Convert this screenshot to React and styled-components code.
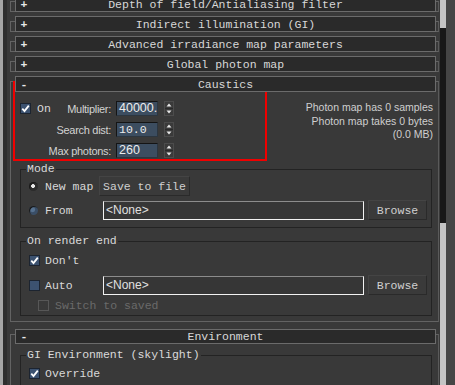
import styled, { createGlobalStyle } from 'styled-components';

const mono = `"Liberation Mono", "DejaVu Sans Mono", monospace`;
const sans = `"Liberation Sans", Arial, sans-serif`;

const GlobalStyle = createGlobalStyle`
  html, body { margin: 0; padding: 0; background: #393939; }
  body { width: 455px; height: 385px; overflow: hidden; }
`;

const Window = styled.div`
  position: relative;
  display: flex;
  width: 455px;
  height: 385px;
  overflow: hidden;
  background: #393939;
  color: #d6d6d6;
  font-family: ${mono};
  font-size: 11.5px;
`;

const LeftEdge = styled.div`
  flex: none;
  width: 8px;
  background: linear-gradient(to right, #a6a6a6 0 3px, #2e2e2e 3px 7px, #393939 7px);
`;

const Panel = styled.div`
  flex: 1;
  min-width: 0;
  padding: 0 1px 0 2px;
  margin-top: -4px;
`;

const ScrollTrack = styled.div`
  flex: none;
  width: 6px;
  display: flex;
  flex-direction: column;
  background: #181818;
`;

const Thumb = styled.div`
  flex: none;
  height: ${p => p.$h}px;
  margin-top: ${p => p.$top || 0}px;
  background: #c4c4c4;
`;

const RightEdge = styled.div`
  flex: none;
  width: 9px;
  background: #454545;
`;

const Rollout = styled.section`
  position: relative;
  margin: 0 0 ${p => p.$mb || 4}px;
  padding: 0 3px 0 5px;
  &::before {
    content: '';
    position: absolute;
    left: 0;
    right: 0;
    top: 5px;
    bottom: 0;
    border: 1px solid #636363;
    border-right-color: #5a5a5a;
  }
`;

const RollHeader = styled.div`
  position: relative;
  z-index: 1;
  display: grid;
  grid-template-columns: 16px 1fr 16px;
  align-items: center;
  height: ${p => p.$h || 16}px;
  box-sizing: border-box;
  border: 1px solid #6b6b6b;
  background: #2a2a2a;
  line-height: 13px;
  color: #d8d8d8;
`;

const Toggle = styled.span`
  text-align: center;
  font-weight: bold;
  color: #e8e8e8;
`;

const Title = styled.span`
  text-align: center;
  white-space: nowrap;
`;

const RollBody = styled.div`
  position: relative;
  padding: ${p => p.$pt}px 4px ${p => p.$pb}px 5px;
`;

const TopSection = styled.div`
  display: flex;
  justify-content: space-between;
`;

const Params = styled.div`
  display: flex;
  flex-direction: column;
  gap: 6px;
`;

const ParamRow = styled.div`
  display: flex;
  align-items: center;
  height: 15px;
`;

const LabelCell = styled.div`
  width: 91px;
  display: flex;
  align-items: center;
  justify-content: space-between;
`;

const SansLabel = styled.span`
  margin-left: auto;
  font-family: ${sans};
  font-size: 11px;
  letter-spacing: -0.3px;
  color: #d2d2d2;
  white-space: nowrap;
`;

const SpinInput = styled.div`
  margin-left: 5px;
  width: 42px;
  height: 15px;
  box-sizing: border-box;
  border: 1px solid #141414;
  border-right-color: #2c3640;
  border-bottom-color: #2c3640;
  background: #3c4d60;
  color: #ececec;
  font-family: ${p => (p.$mono ? mono : sans)};
  font-size: ${p => (p.$mono ? 11.5 : 12.5)}px;
  line-height: 13px;
  padding-left: 2px;
  overflow: hidden;
  white-space: nowrap;
`;

const SpinBox = styled.svg`
  margin-left: 6px;
  flex: none;
`;

const Stats = styled.div`
  margin-right: -1px;
  font-family: ${sans};
  font-size: 10.5px;
  line-height: 13.5px;
  text-align: right;
  color: #cfcfcf;
`;

const Group = styled.fieldset`
  margin: ${p => p.$mt}px 0 0;
  padding: 0 4px ${p => p.$pb}px 8px;
  border: 1px solid #232323;
  min-width: 0;
`;

const Legend = styled.legend`
  margin-left: -3px;
  padding: 0 1px;
  line-height: 12px;
  color: #dadada;
  white-space: nowrap;
`;

const Row = styled.div`
  display: flex;
  align-items: center;
  height: ${p => p.$h}px;
  margin-top: ${p => p.$mt}px;
`;

const OptionLabel = styled.label`
  flex: none;
  width: ${p => (p.$w ? `${p.$w}px` : 'auto')};
  display: flex;
  align-items: center;
  gap: ${p => p.$gap || 5}px;
  color: ${p => (p.$disabled ? '#6a6a6a' : '#d8d8d8')};
  white-space: nowrap;
`;

const Box = styled.span`
  flex: none;
  width: 11px;
  height: 11px;
  box-sizing: border-box;
  margin-left: ${p => p.$indent || 0}px;
  display: inline-flex;
  align-items: center;
  justify-content: center;
  background: ${p => (p.$disabled ? 'transparent' : '#3c5270')};
  border: 1px solid ${p => (p.$disabled ? '#575757' : '#1c2430')};
`;

const RadioDot = styled.span`
  flex: none;
  width: 9px;
  height: 9px;
  border-radius: 50%;
  background: ${p =>
    p.$on
      ? 'radial-gradient(circle at 45% 45%, #e6e6e6 0 1.6px, #2a2a2a 2.2px)'
      : 'radial-gradient(circle at 40% 40%, #56718f 0 2px, #3a4e66 3px)'};
  box-shadow: inset 1px 1px 0 #1a1a1a;
`;

const Button = styled.div`
  flex: none;
  width: ${p => p.$w}px;
  height: 20px;
  margin-left: ${p => p.$ml || 0}px;
  box-sizing: border-box;
  display: flex;
  align-items: center;
  justify-content: center;
  background: #3a3a3a;
  border: 1px solid #2a2a2a;
  border-top-color: #444;
  border-left-color: #444;
  color: #d0d0d0;
  white-space: nowrap;
`;

const Field = styled.div`
  flex: none;
  width: 261px;
  height: 19px;
  box-sizing: border-box;
  background: #363636;
  border: 1px solid #f2f2f2;
  border-top-color: #8c8c8c;
  font-family: ${sans};
  font-size: 12px;
  line-height: 17px;
  padding-left: 2px;
  color: #e0e0e0;
`;

const Annotation = styled.div`
  position: absolute;
  left: 13px;
  top: 81px;
  width: 254px;
  height: 80px;
  box-sizing: border-box;
  border: 2px solid #f00000;
  pointer-events: none;
`;

const Check = () => (
  <svg width="9" height="9" viewBox="0 0 9 9">
    <path d="M1.3 4.6 L3.5 7 L7.8 1.6" stroke="#fff" strokeWidth="1.8" fill="none" />
  </svg>
);

const CheckBox = ({ checked, disabled, indent }) => (
  <Box $disabled={disabled} $indent={indent}>
    {checked && <Check />}
  </Box>
);

const Spinner = () => (
  <SpinBox width="10" height="15" viewBox="0 0 10 15">
    <rect x="0.5" y="0.5" width="9" height="14" fill="#3a3a3a" stroke="#4c4c4c" />
    <line x1="1" y1="7.5" x2="9" y2="7.5" stroke="#2a2a2a" />
    <path d="M5 2.5 L7.5 5.5 L2.5 5.5 Z" fill="#e8e8e8" />
    <path d="M5 12.5 L7.5 9.5 L2.5 9.5 Z" fill="#e8e8e8" />
  </SpinBox>
);

const Collapsed = ({ title }) => (
  <Rollout>
    <RollHeader>
      <Toggle>+</Toggle>
      <Title>{title}</Title>
      <span />
    </RollHeader>
  </Rollout>
);

export default function App() {
  return (
    <Window>
      <GlobalStyle />
      <LeftEdge />
      <Panel>
        <Collapsed title="Depth of field/Antialiasing filter" />
        <Collapsed title="Indirect illumination (GI)" />
        <Collapsed title="Advanced irradiance map parameters" />
        <Collapsed title="Global photon map" />

        <Rollout $mb={7}>
          <RollHeader>
            <Toggle>-</Toggle>
            <Title>Caustics</Title>
            <span />
          </RollHeader>
          <RollBody $pt={9} $pb={6}>
            <TopSection>
              <Params>
                <ParamRow>
                  <LabelCell>
                    <OptionLabel $gap={6}>
                      <CheckBox checked />
                      On
                    </OptionLabel>
                    <SansLabel>Multiplier:</SansLabel>
                  </LabelCell>
                  <SpinInput>40000.</SpinInput>
                  <Spinner />
                </ParamRow>
                <ParamRow>
                  <LabelCell>
                    <SansLabel>Search dist:</SansLabel>
                  </LabelCell>
                  <SpinInput $mono>10.0</SpinInput>
                  <Spinner />
                </ParamRow>
                <ParamRow>
                  <LabelCell>
                    <SansLabel>Max photons:</SansLabel>
                  </LabelCell>
                  <SpinInput>260</SpinInput>
                  <Spinner />
                </ParamRow>
              </Params>
              <Stats>
                Photon map has 0 samples
                <br />
                Photon map takes 0 bytes
                <br />
                (0.0 MB)
              </Stats>
            </TopSection>

            <Group $mt={5} $pb={7}>
              <Legend>Mode</Legend>
              <Row $h={20} $mt={1}>
                <OptionLabel $w={70} $gap={7}>
                  <RadioDot $on />
                  New map
                </OptionLabel>
                <Button $w={91}>Save to file</Button>
              </Row>
              <Row $h={20} $mt={4}>
                <OptionLabel $w={74} $gap={7}>
                  <RadioDot />
                  From
                </OptionLabel>
                <Field>&lt;None&gt;</Field>
                <Button $w={59} $ml={4}>Browse</Button>
              </Row>
            </Group>

            <Group $mt={7} $pb={4}>
              <Legend>On render end</Legend>
              <Row $h={16} $mt={5}>
                <OptionLabel>
                  <CheckBox checked />
                  Don't
                </OptionLabel>
              </Row>
              <Row $h={20} $mt={7}>
                <OptionLabel $w={74}>
                  <CheckBox />
                  Auto
                </OptionLabel>
                <Field>&lt;None&gt;</Field>
                <Button $w={59} $ml={4}>Browse</Button>
              </Row>
              <Row $h={12} $mt={4}>
                <OptionLabel $disabled $gap={6}>
                  <CheckBox disabled indent={9} />
                  Switch to saved
                </OptionLabel>
              </Row>
            </Group>
          </RollBody>
        </Rollout>

        <Rollout>
          <RollHeader $h={15}>
            <Toggle>-</Toggle>
            <Title>Environment</Title>
            <span />
          </RollHeader>
          <RollBody $pt={5} $pb={10}>
            <Group $mt={0} $pb={10}>
              <Legend>GI Environment (skylight)</Legend>
              <Row $h={14} $mt={5}>
                <OptionLabel>
                  <CheckBox checked />
                  Override
                </OptionLabel>
              </Row>
            </Group>
          </RollBody>
        </Rollout>
      </Panel>
      <ScrollTrack>
        <Thumb $h={28} />
        <Thumb $h={200} $top={195} />
      </ScrollTrack>
      <RightEdge />
      <Annotation />
    </Window>
  );
}
